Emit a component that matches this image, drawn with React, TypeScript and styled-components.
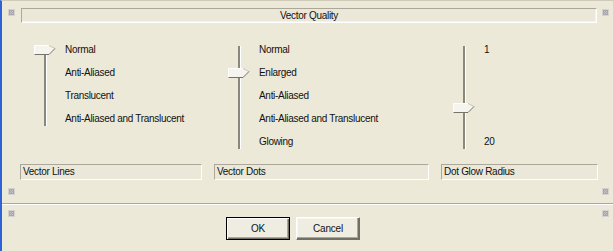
import styled, { createGlobalStyle } from 'styled-components'

const GlobalStyle = createGlobalStyle`
  html, body {
    margin: 0;
    padding: 0;
    background: #ece9d8;
  }
  * {
    box-sizing: border-box;
  }
`

type SliderProps = {
  labels: string[]
  rows: number
  value: number // position in rows (0 = first row)
}

function Corner() {
  return (
    <CornerBox>
      <svg width="7" height="7" viewBox="0 0 7 7">
        <rect x="0" y="0" width="7" height="7" fill="#d4d2cc" />
        <rect x="1" y="1" width="5" height="5" fill="#a9a8ae" />
        <rect x="2" y="2" width="1" height="1" fill="#c3c2c6" />
        <rect x="4" y="2" width="1" height="1" fill="#c3c2c6" />
        <rect x="3" y="3" width="1" height="1" fill="#c3c2c6" />
        <rect x="2" y="4" width="1" height="1" fill="#c3c2c6" />
        <rect x="4" y="4" width="1" height="1" fill="#c3c2c6" />
      </svg>
    </CornerBox>
  )
}

function Thumb() {
  return (
    <svg width="22" height="11" viewBox="0 0 22 11">
      <polygon points="0.5,0.5 15,0.5 21,3.5 15,9.5 0.5,9.5" fill="#f5f4ee" />
      <polyline points="0.5,9.5 0.5,0.5 15,0.5" fill="none" stroke="#ffffff" />
      <line x1="15" y1="0.5" x2="21" y2="3.5" stroke="#c9c6b8" />
      <polyline points="0.5,9.5 15,9.5 21,3.5" fill="none" stroke="#76746a" />
    </svg>
  )
}

function Slider({ labels, rows, value }: SliderProps) {
  return (
    <SliderRow>
      <TrackArea $rows={rows}>
        <Track $rows={rows} />
        <ThumbHolder style={{ top: 7 + value * 23 }}>
          <Thumb />
        </ThumbHolder>
      </TrackArea>
      <Labels>
        {labels.map((l, i) => (
          <Label key={i}>{l}</Label>
        ))}
      </Labels>
    </SliderRow>
  )
}

export default function App() {
  return (
    <>
      <GlobalStyle />
      <Dialog>
        <TopRow>
          <Corner />
          <TitleField>Vector Quality</TitleField>
          <Corner />
        </TopRow>

        <SliderArea>
          <Column $width={194}>
            <Slider
              rows={4}
              value={0}
              labels={['Normal', 'Anti-Aliased', 'Translucent', 'Anti-Aliased and Translucent']}
            />
          </Column>
          <Column $width={225}>
            <Slider
              rows={5}
              value={1}
              labels={['Normal', 'Enlarged', 'Anti-Aliased', 'Anti-Aliased and Translucent', 'Glowing']}
            />
          </Column>
          <Column $width={140}>
            <Slider rows={5} value={(13 - 1) / 19 * 4} labels={['1', '', '', '', '20']} />
          </Column>
        </SliderArea>

        <FieldRow>
          <Field $width={182}>Vector Lines</Field>
          <Field $width={215}>Vector Dots</Field>
          <Field $width={157}>Dot Glow Radius</Field>
        </FieldRow>

        <CornerRow>
          <Corner />
          <Corner />
        </CornerRow>

        <Separator />

        <BottomRow>
          <Corner />
          <Buttons>
            <Button $default>OK</Button>
            <Button>Cancel</Button>
          </Buttons>
          <Corner />
        </BottomRow>
      </Dialog>
    </>
  )
}

const Dialog = styled.div`
  width: 613px;
  height: 251px;
  background: #ece9d8;
  border-left: 2px solid #2f62d6;
  border-top: 1px solid #cfcbbb;
  font-family: 'Liberation Sans', Arial, sans-serif;
  font-size: 10px;
  letter-spacing: -0.3px;
  color: #111;
  display: flex;
  flex-direction: column;
  overflow: hidden;
`

const CornerBox = styled.div`
  width: 7px;
  height: 7px;
  flex: none;
  display: flex;
  svg {
    display: block;
  }
`

const TopRow = styled.div`
  display: flex;
  align-items: flex-start;
  padding: 7px 4px 0 6px;
  gap: 6px;
  ${CornerBox} {
    margin-top: 1px;
  }
  ${CornerBox}:last-child {
    margin-left: -1px;
  }
`

const TitleField = styled.div`
  flex: 1;
  height: 15px;
  line-height: 13px;
  text-align: center;
  border-top: 1px solid #aca899;
  border-left: 1px solid #aca899;
  border-bottom: 1px solid #ffffff;
  border-right: 1px solid #ffffff;
  background: #ebe8d9;
  box-shadow: inset -1px -1px 0 #f4f2ea;
`

const SliderArea = styled.div`
  display: flex;
  padding-left: 32px;
  margin-top: 15px;
`

const Column = styled.div<{ $width: number }>`
  width: ${(p) => p.$width}px;
  flex: none;
`

const SliderRow = styled.div`
  display: flex;
  align-items: flex-start;
`

const TrackArea = styled.div<{ $rows: number }>`
  position: relative;
  width: 31px;
  height: ${(p) => p.$rows * 23}px;
  flex: none;
`

const Track = styled.div<{ $rows: number }>`
  margin-left: 10px;
  margin-top: 8px;
  width: 2px;
  height: ${(p) => p.$rows * 23 - 12}px;
  background: #8a887d;
  box-shadow: 1px 0 0 #ffffff;
`

const ThumbHolder = styled.div`
  position: absolute;
  left: 0;
  width: 22px;
  height: 11px;
  svg {
    display: block;
  }
`

const Labels = styled.div`
  display: flex;
  flex-direction: column;
`

const Label = styled.div`
  height: 23px;
  line-height: 23px;
  white-space: nowrap;
`

const FieldRow = styled.div`
  display: flex;
  gap: 12px;
  padding-left: 18px;
  margin-top: 11px;
`

const Field = styled.div<{ $width: number }>`
  width: ${(p) => p.$width}px;
  height: 16px;
  line-height: 14px;
  padding-left: 2px;
  border-top: 1px solid #aca899;
  border-left: 1px solid #aca899;
  border-bottom: 1px solid #ffffff;
  border-right: 1px solid #ffffff;
  background: #ebe8d9;
  white-space: nowrap;
`

const CornerRow = styled.div`
  display: flex;
  justify-content: space-between;
  padding: 0 4px 0 6px;
  margin-top: 8px;
`

const Separator = styled.div`
  margin-top: 8px;
  height: 2px;
  border-top: 1px solid #aca899;
  border-bottom: 1px solid #ffffff;
`

const BottomRow = styled.div`
  display: flex;
  align-items: flex-start;
  justify-content: space-between;
  padding: 0 4px 0 6px;
  margin-top: 5px;
`

const Buttons = styled.div`
  display: flex;
  gap: 6px;
  margin-top: 7px;
  margin-right: auto;
  margin-left: 211px;
`

const Button = styled.button<{ $default?: boolean }>`
  width: 64px;
  height: 23px;
  padding: 0;
  font-family: 'Liberation Sans', Arial, sans-serif;
  font-size: 10px;
  letter-spacing: -0.2px;
  color: #111;
  background: #efede2;
  border: 1px solid ${(p) => (p.$default ? '#000000' : '#ffffff')};
  box-shadow: ${(p) =>
    p.$default
      ? 'inset 1px 1px 0 #ffffff, inset -1px -1px 0 #716f64, inset -2px -2px 0 #aca899'
      : 'inset -1px -1px 0 #716f64, inset -2px -2px 0 #aca899, inset 1px 1px 0 #f7f6f0'};
  border-right-color: ${(p) => (p.$default ? '#000000' : '#716f64')};
  border-bottom-color: ${(p) => (p.$default ? '#000000' : '#716f64')};
`
